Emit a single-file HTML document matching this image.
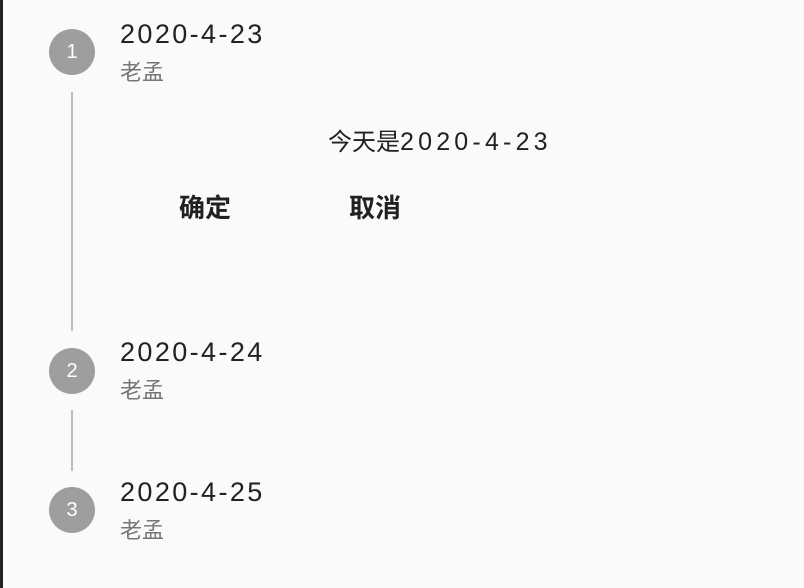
<!DOCTYPE html>
<html><head><meta charset="utf-8"><style>
body{margin:0;width:804px;height:588px;background:#fafafa;position:relative;overflow:hidden;font-family:"Liberation Sans","Noto Sans CJK SC",sans-serif;}
.edge{position:absolute;top:0;bottom:0;width:3px;background:#222;}
.c{position:absolute;left:49px;width:46px;height:46px;border-radius:50%;background:#9e9e9e;color:#fff;font-size:20px;line-height:46px;text-align:center;}
.l{position:absolute;left:71px;width:2px;background:#bdbdbd;}
.t{position:absolute;left:120px;font-size:27px;color:#212121;line-height:30px;letter-spacing:2.4px;}
.s{position:absolute;left:120px;font-size:22px;color:#757575;line-height:24px;}
.x{position:absolute;font-size:24px;color:#212121;line-height:28px;}
.d{letter-spacing:4.2px;font-size:25px}
</style></head><body>
<div class="edge" style="left:0"></div>
<div class="c" style="top:29px">1</div>
<div class="l" style="top:92px;height:239px"></div>
<div class="t" style="top:19px">2020-4-23</div>
<div class="s" style="top:61px">老孟</div>
<div class="x" style="left:328px;top:128px">今天是<span class="d">2020-4-23</span></div>
<div class="x" style="left:179px;top:194px;font-weight:bold;font-size:26px">确定</div>
<div class="x" style="left:349px;top:194px;font-weight:bold;font-size:26px">取消</div>
<div class="c" style="top:348px">2</div>
<div class="t" style="top:337px">2020-4-24</div>
<div class="s" style="top:379px">老孟</div>
<div class="l" style="top:410px;height:61px"></div>
<div class="c" style="top:487px">3</div>
<div class="t" style="top:477px">2020-4-25</div>
<div class="s" style="top:519px">老孟</div>
</body></html>
